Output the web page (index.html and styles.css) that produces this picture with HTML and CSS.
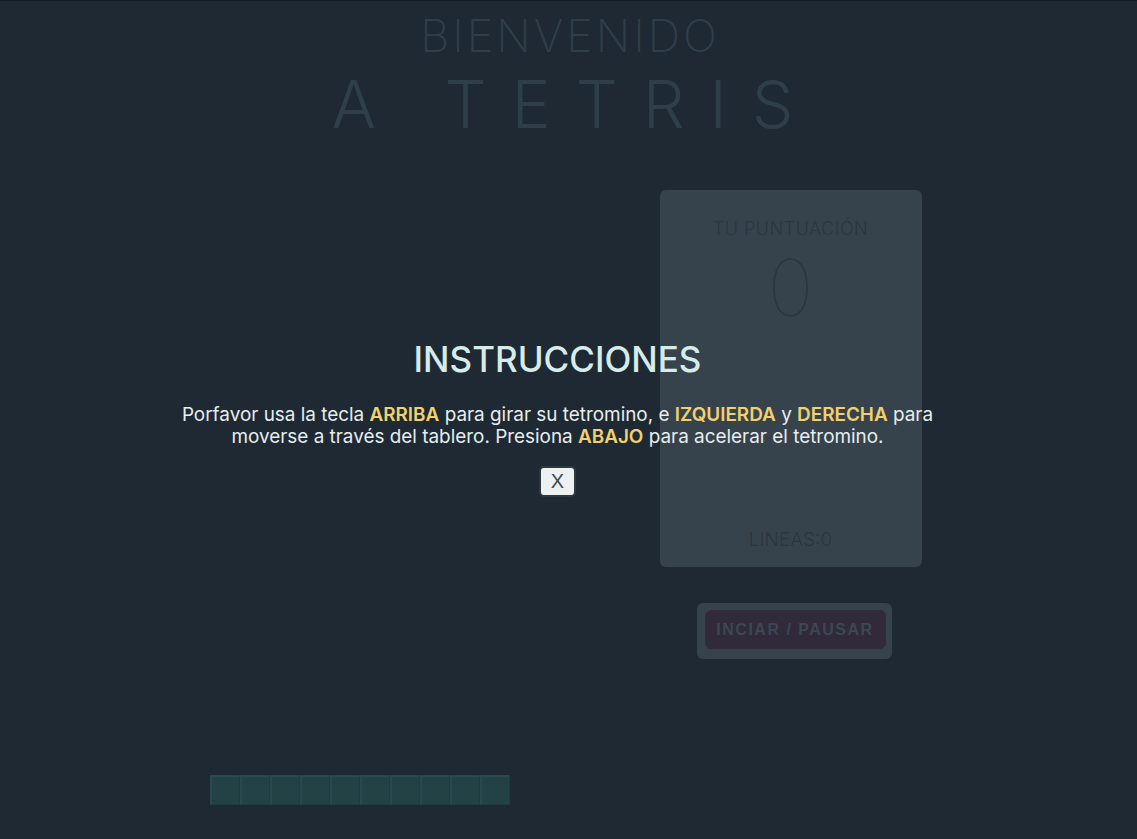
FILE: index.html
```html
<!DOCTYPE html>
<html lang="es">
<head>
<meta charset="utf-8">
<title>Tetris</title>
<link rel="stylesheet" href="styles.css">
</head>
<body>
<header class="header">
  <h1 class="title-small">BIENVENIDO</h1>
  <h2 class="title-big">A TETRIS</h2>
</header>
<main class="game">
  <div class="grid" id="grid"></div>
  <div class="side">
    <div class="score-card">
      <div class="score-label">TU PUNTUACIÓN</div>
      <div class="score-value">0</div>
      <div class="lines">LINEAS:0</div>
    </div>
    <div class="btn-wrap">
      <button class="start-btn">INCIAR / PAUSAR</button>
    </div>
  </div>
</main>
<div class="modal">
  <div class="modal-box">
    <h2 class="modal-title">INSTRUCCIONES</h2>
    <p class="modal-text">Porfavor usa la tecla <span class="key">ARRIBA</span> para girar su tetromino, e <span class="key">IZQUIERDA</span> y <span class="key">DERECHA</span> para moverse a través del tablero. Presiona <span class="key">ABAJO</span> para acelerar el tetromino.</p>
    <button class="close-btn">X</button>
  </div>
</div>
<script>
  var g = document.getElementById('grid');
  for (var i = 0; i < 210; i++) {
    var d = document.createElement('div');
    d.className = i >= 200 ? 'cell taken' : 'cell';
    g.appendChild(d);
  }
</script>
</body>
</html>
```
FILE: styles.css
```css
* { box-sizing: border-box; }
html, body { margin: 0; padding: 0; }
body {
  background: #1e2933;
  border-top: 1px solid #121b21;
  font-family: "Inter", "Noto Sans", sans-serif;
  min-height: 839px;
  overflow: hidden;
  position: relative;
}
.header {
  text-align: center;
  padding-top: 10px;
  margin-left: 2px;
}
.title-small {
  margin: 0;
  font-weight: 200;
  font-size: 45px;
  line-height: 50px;
  color: #2f3f4a;
  letter-spacing: 3px;
  padding-left: 1px;
}
.title-big {
  margin: 0;
  font-weight: 300;
  font-size: 66px;
  line-height: 86px;
  color: #2f3f4a;
  letter-spacing: 25px;
  padding-left: 11px;
}
.game {
  display: flex;
  justify-content: center;
  gap: 150px;
  margin-top: 28px;
  padding-right: 6px;
}
.grid {
  width: 300px;
  height: 630px;
  display: flex;
  flex-wrap: wrap;
  align-content: flex-start;
}
.cell { width: 30px; height: 30px; }
.cell.taken {
  background: #234246;
  border-top: 2px solid #28494d;
  border-left: 2px solid #28494d;
  border-right: 1px solid #1f3b3f;
  border-bottom: 1px solid #1f3b3f;
}
.side {
  width: 262px;
  margin-top: 15px;
  display: flex;
  flex-direction: column;
  align-items: center;
}
.score-card {
  width: 262px;
  height: 377px;
  background: #37434c;
  border-radius: 6px;
  display: flex;
  flex-direction: column;
  align-items: center;
  padding-top: 28px;
  color: #2b3640;
}
.score-label {
  font-size: 18px;
  font-weight: 300;
  letter-spacing: 0.5px;
}
.score-value {
  font-size: 78px;
  font-weight: 100;
  line-height: 90px;
  margin-top: 4px;
}
.lines {
  margin-top: auto;
  margin-bottom: 16px;
  font-size: 19px;
  font-weight: 300;
}
.btn-wrap {
  margin-top: 36px;
  margin-left: 7px;
  background: #36434c;
  border-radius: 6px;
  padding: 7px 6px 10px 8px;
}
.start-btn {
  display: block;
  width: 181px;
  height: 39px;
  background: #302a3a;
  border: 1px solid #342b3d;
  border-radius: 6px;
  color: #3b4852;
  font-family: "Liberation Sans", Arial, sans-serif;
  font-weight: bold;
  font-size: 16px;
  letter-spacing: 1.5px;
  padding: 0;
}
.modal {
  position: absolute;
  inset: 0;
  display: flex;
  justify-content: center;
  align-items: flex-start;
}
.modal-box {
  margin-top: 335px;
  margin-right: 22px;
  width: 790px;
  text-align: center;
}
.modal-title {
  margin: 0;
  font-size: 35px;
  font-weight: 500;
  line-height: 46px;
  color: #d6ecea;
}
.modal-text {
  margin: 22px 0 0;
  font-size: 18.9px;
  line-height: 22px;
  color: #e8eeee;
}
.key { color: #f2d06e; font-weight: 600; }
.close-btn {
  margin-top: 18px;
  width: 37px;
  height: 31px;
  background: #eef1f1;
  border: 2px solid #2c3a40;
  border-radius: 5px;
  color: #3d4b55;
  font-family: "Liberation Sans", Arial, sans-serif;
  font-size: 20px;
  padding: 0;
}
```
